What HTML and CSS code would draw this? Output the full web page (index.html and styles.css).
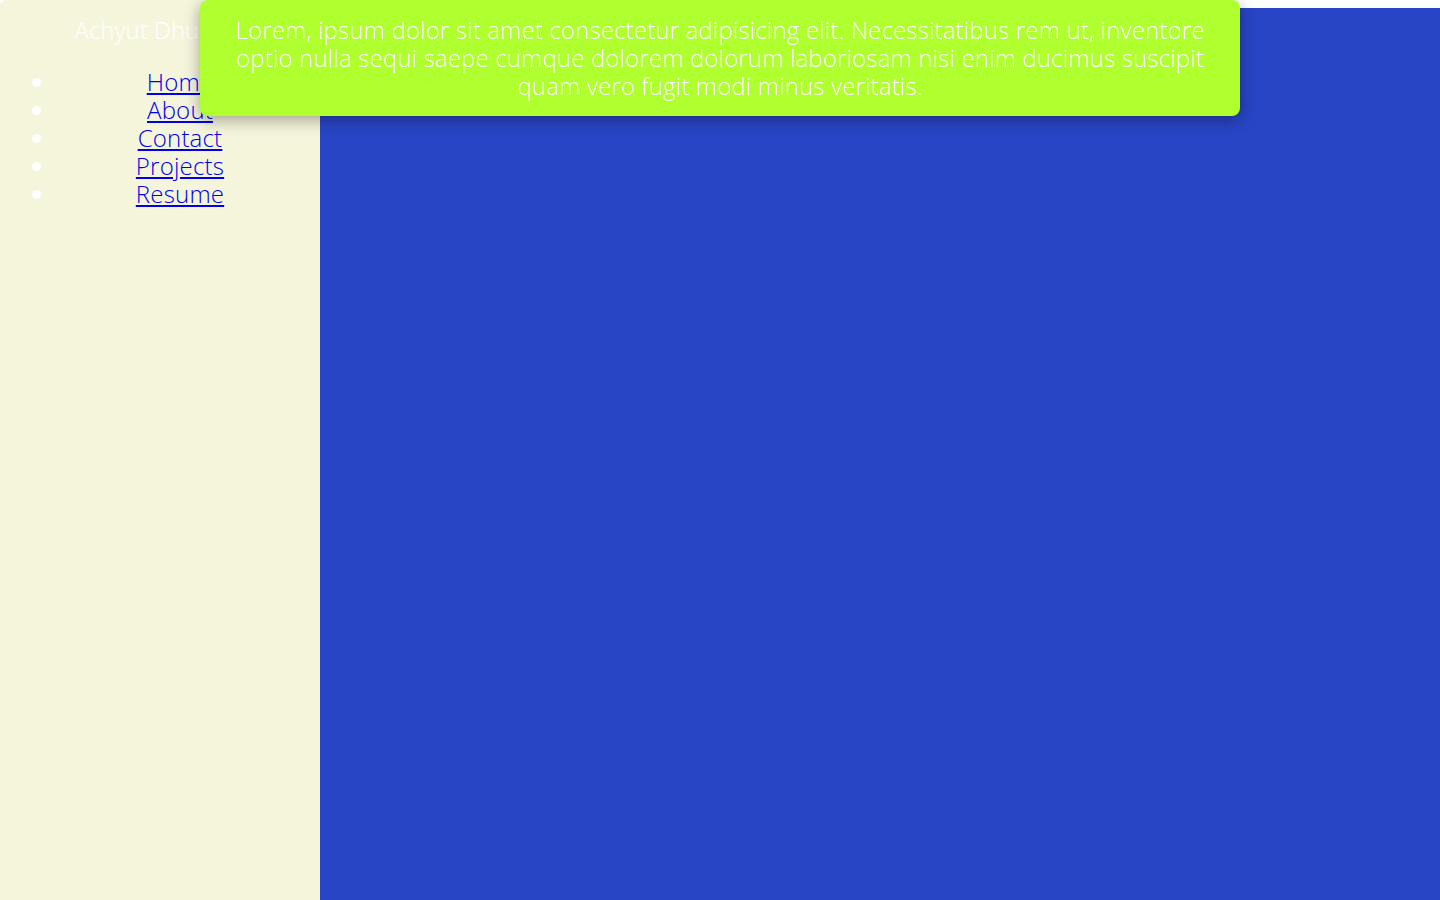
FILE: index.html
```html
<!DOCTYPE html>
<html lang="en">
<head>
<meta charset="utf-8">
<title>Achyut Dhungana</title>
<link rel="stylesheet" href="styles.css">
</head>
<body>
<aside class="sidebar">
  <div class="brand">Achyut Dhungana</div>
  <ul class="nav">
    <li><a href="#">Home</a></li>
    <li><a href="#">About</a></li>
    <li><a href="#">Contact</a></li>
    <li><a href="#">Projects</a></li>
    <li><a href="#">Resume</a></li>
  </ul>
</aside>
<main class="main"></main>
<div class="banner">Lorem, ipsum dolor sit amet consectetur adipisicing elit. Necessitatibus rem ut, inventore optio nulla sequi saepe cumque dolorem dolorum laboriosam nisi enim ducimus suscipit quam vero fugit modi minus veritatis.</div>
</body>
</html>
```
FILE: styles.css
```css
html, body {
  height: 100%;
}
body {
  margin: 0;
  background: #ffffff;
  font-family: "Open Sans", "Noto Sans", sans-serif;
  font-weight: 300;
  font-size: 24px;
  line-height: 28px;
  color: #ffffff;
  overflow: hidden;
}
.sidebar {
  position: fixed;
  top: 0;
  left: 0;
  bottom: 0;
  width: 320px;
  box-sizing: border-box;
  padding: 16px;
  background: #f5f5dc;
  border-radius: 6px 0 0 0;
}
.brand {
  text-align: center;
  height: 28px;
  padding-left: 20px;
}
.nav {
  margin: 24px 0 0 0;
  padding-left: 40px;
  text-align: center;
}
.nav li {
  letter-spacing: 0.2px;
}
.nav a {
  color: #0000ee;
}
.main {
  margin: 8px 0 0 320px;
  height: calc(100% - 8px);
  background: #2845c6;
}
.banner {
  position: absolute;
  top: 0;
  left: 200px;
  width: 1040px;
  box-sizing: border-box;
  padding: 16px;
  background: #b0ff2f;
  border-radius: 8px;
  text-align: center;
  letter-spacing: 0.15px;
  box-shadow: 0 4px 16px rgba(0, 0, 0, 0.35);
}
```
